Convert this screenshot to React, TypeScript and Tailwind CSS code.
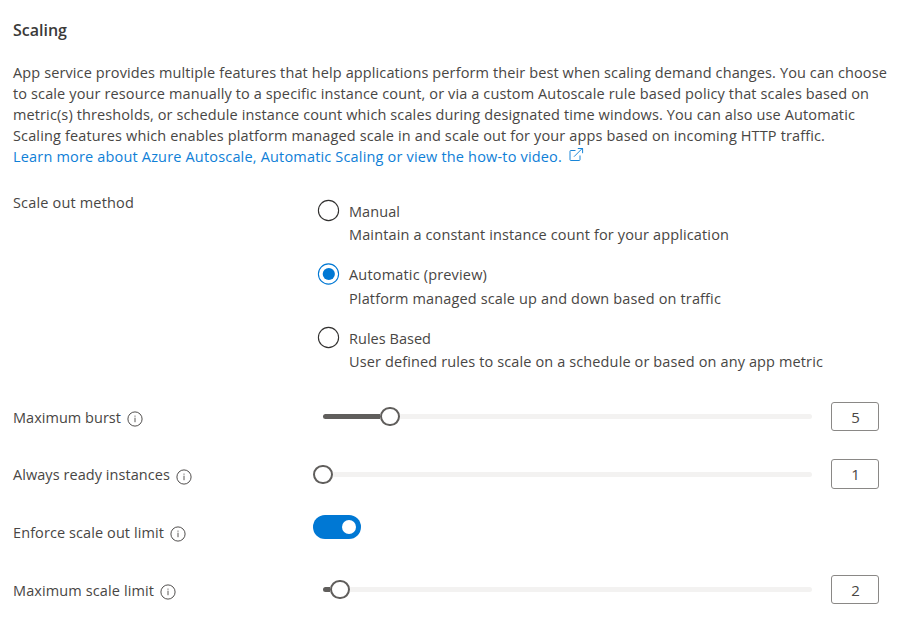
import type { ReactNode } from "react";

const methods = [
  {
    title: "Manual",
    titleSpacing: "tracking-[0.066px]",
    text: "Maintain a constant instance count for your application",
    textSpacing: "tracking-[0.131px]",
    gap: "pt-[2px]",
    height: "h-[63px]",
    selected: false,
  },
  {
    title: "Automatic (preview)",
    titleSpacing: "tracking-[0.171px]",
    text: "Platform managed scale up and down based on traffic",
    textSpacing: "tracking-[0.137px]",
    gap: "pt-[3px]",
    height: "h-[64px]",
    selected: true,
  },
  {
    title: "Rules Based",
    titleSpacing: "tracking-[0.03px]",
    text: "User defined rules to scale on a schedule or based on any app metric",
    textSpacing: "tracking-[0.123px]",
    gap: "pt-[2px]",
    height: "h-[63px]",
    selected: false,
  },
];

function InfoIcon({ shift }: { shift: string }) {
  return (
    <svg className={`ml-[5.7px] size-4 shrink-0 ${shift}`} viewBox="0 0 16 16" fill="none" stroke="#484644">
      <circle cx="8" cy="8" r="7.1" strokeWidth="0.95" />
      <path d="M8 6.7V11.2" strokeWidth="0.9" />
      <path d="M8 4.6V5.7" strokeWidth="0.9" />
    </svg>
  );
}

function ExternalIcon() {
  return (
    <svg className="ml-[7px] mt-[1px] h-[15px] w-[15px] shrink-0" viewBox="0 0 15 15" fill="none" stroke="#0078d4" strokeWidth="0.9">
      <path d="M6.5 3.5H1.8Q1 3.5 1 4.3V12.7Q1 13.5 1.8 13.5H10.2Q11 13.5 11 12.7V8.5" />
      <path d="M5 9.7L13.5 1.2M8.8 1.5H13.6V6.2" />
    </svg>
  );
}

function Radio({ selected }: { selected: boolean }) {
  return (
    <svg className="-mt-[2px] size-[23px] shrink-0" viewBox="0 0 23 23">
      <circle
        cx="11.5"
        cy={selected ? 12 : 11.5}
        r="10.1"
        fill="white"
        stroke={selected ? "#0078d4" : "#323130"}
        strokeWidth="1.1"
      />
      {selected && <circle cx="11.8" cy="12" r="6.1" fill="#0078d4" />}
    </svg>
  );
}

function Row({ label, spacing, shift, children }: { label: string; spacing: string; shift: string; children: ReactNode }) {
  return (
    <div className="flex pt-[5px]">
      <div className="flex h-[21px] w-[300px] shrink-0">
        <span className={`whitespace-nowrap ${spacing}`}>{label}</span>
        <InfoIcon shift={shift} />
      </div>
      {children}
    </div>
  );
}

function Slider({ fill, lead, offset }: { fill: string; lead: string; offset: string }) {
  return (
    <div className={`flex h-[19px] w-[499px] shrink-0 items-center ${offset}`}>
      <div className={`h-[5px] shrink-0 rounded-l-full bg-[#605e5c] ${fill} ${lead}`} />
      <div className="size-[19.5px] shrink-0 rounded-full border-2 border-[#605e5c] bg-white" />
      <div className="h-[5px] grow rounded-r-full bg-[#f3f2f1]" />
    </div>
  );
}

function NumberBox({ value, size }: { value: number; size: string }) {
  return (
    <div
      className={`ml-[19px] -mt-[5px] flex w-12 shrink-0 justify-center rounded-[3px] border border-[#8a8886] pl-px pt-[4px] text-[15px] ${size}`}
    >
      {value}
    </div>
  );
}

export default function App() {
  return (
    <main className="h-[621px] w-[905px] overflow-hidden bg-white pl-[13px] pt-[20px] font-['Open_Sans','Noto_Sans',sans-serif] text-[14.5px] leading-[21px] text-[#484644]">
      <h2 className="h-[42px] text-[16px] font-semibold text-[#3b3a39]">Scaling</h2>

      <p className="whitespace-nowrap">
        <span className="block tracking-[0.114px]">
          App service provides multiple features that help applications perform their best when scaling demand changes. You can choose
        </span>
        <span className="block tracking-[0.124px]">
          to scale your resource manually to a specific instance count, or via a custom Autoscale rule based policy that scales based on
        </span>
        <span className="block tracking-[0.116px]">
          metric(s) thresholds, or schedule instance count which scales during designated time windows. You can also use Automatic
        </span>
        <span className="block tracking-[0.137px]">
          Scaling features which enables platform managed scale in and scale out for your apps based on incoming HTTP traffic.
        </span>
      </p>
      <a className="flex h-[21px] whitespace-nowrap tracking-[0.175px] text-[#0f80d7]">
        Learn more about Azure Autoscale, Automatic Scaling or view the how-to video.
        <ExternalIcon />
      </a>

      <section className="mt-[25px] flex h-[215px]">
        <div className="w-[304px] shrink-0 tracking-[0.169px]">Scale out method</div>
        <div className="pt-[9px]">
          {methods.map((m) => (
            <div key={m.title} className={`flex ${m.height}`}>
              <Radio selected={m.selected} />
              <div className="ml-[9px] whitespace-nowrap">
                <div className={m.titleSpacing}>{m.title}</div>
                <div className={`${m.gap} ${m.textSpacing}`}>{m.text}</div>
              </div>
            </div>
          ))}
        </div>
      </section>

      <div className="-mt-[5px] flex h-[57px]">
        <Row label="Maximum burst" spacing="tracking-[0.029px]" shift="mt-[3.5px]">
          <Slider fill="w-[57px]" lead="ml-[10px]" offset="mt-0" />
          <NumberBox value={5} size="h-[29px]" />
        </Row>
      </div>
      <div className="flex h-[58px]">
        <Row label="Always ready instances" spacing="tracking-[0.06px]" shift="mt-[4.5px]">
          <Slider fill="w-0" lead="ml-0" offset="mt-px" />
          <NumberBox value={1} size="h-[30px]" />
        </Row>
      </div>
      <div className="flex h-[58px]">
        <Row label="Enforce scale out limit" spacing="tracking-[0.09px]" shift="mt-[3.5px]">
          <div className="-mt-[7px] flex h-6 w-12 items-center justify-end rounded-full bg-[#0078d4] pr-[5px]">
            <div className="size-[14px] rounded-full bg-white" />
          </div>
        </Row>
      </div>
      <div className="flex">
        <Row label="Maximum scale limit" spacing="tracking-[0.11px]" shift="mt-[3.5px]">
          <Slider fill="w-[7px]" lead="ml-[10px]" offset="mt-0" />
          <NumberBox value={2} size="h-[29px]" />
        </Row>
      </div>
    </main>
  );
}
